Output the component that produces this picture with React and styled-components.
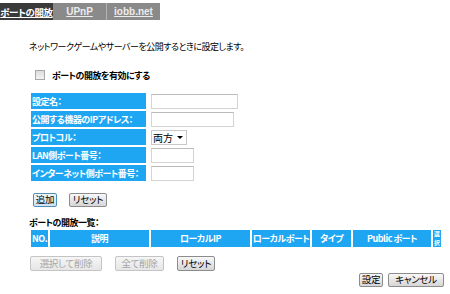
import React from "react";
import styled, { createGlobalStyle } from "styled-components";

const Global = createGlobalStyle`
  html, body { margin: 0; padding: 0; background: #fff; }
  body {
    font-family: "Noto Sans CJK JP", "Liberation Sans", sans-serif;
    font-size: 9px;
    letter-spacing: -0.5px;
    color: #000;
    font-feature-settings: "palt";
  }
`;

const Page = styled.div`
  width: 450px;
  height: 294px;
  padding-top: 3px;
  box-sizing: border-box;
  overflow: hidden;
`;

const TabBar = styled.div`
  display: flex;
  width: 160px;
  height: 17px;
  background: #8a8a8a;
`;

const Tab = styled.a`
  display: flex;
  align-items: center;
  justify-content: center;
  width: ${(p) => p.$w}px;
  height: 100%;
  background: ${(p) => (p.$active ? "#3a3a3a" : "transparent")};
  color: ${(p) => (p.$active ? "#fff" : "#ececec")};
  font-weight: bold;
  font-size: ${(p) => (p.$active ? 9.5 : 10)}px;
  letter-spacing: ${(p) => (p.$active ? "-0.4px" : "0")};
  font-family: ${(p) => (p.$active ? "inherit" : '"Liberation Sans", sans-serif')};
  text-decoration: underline;
  border-right: ${(p) => (p.$sep ? "1px solid #b4b4b4" : "none")};
  box-sizing: border-box;
  white-space: nowrap;
`;

const Content = styled.div`
  padding-left: 29px;
`;

const Intro = styled.p`
  margin: 21px 0 0 0;
  line-height: 12px;
  white-space: nowrap;
`;

const CheckRow = styled.label`
  display: flex;
  align-items: center;
  gap: 7px;
  margin: 16px 0 0 6px;
  height: 12px;
  font-weight: bold;
`;

const Box = styled.span`
  width: 8px;
  height: 8px;
  border: 1px solid #a8a8a8;
  background: linear-gradient(#dcdcdc, #f4f4f4);
`;

const Form = styled.div`
  display: grid;
  grid-template-columns: 115px auto;
  column-gap: 5px;
  row-gap: 2px;
  margin: 12px 0 0 2px;
  justify-items: start;
  align-items: center;
`;

const Label = styled.div`
  width: 115px;
  height: 16px;
  background: #1fa6f3;
  color: #fff;
  font-weight: bold;
  display: flex;
  align-items: center;
  padding-left: 1px;
  box-sizing: border-box;
  white-space: nowrap;
`;

const Input = styled.div`
  width: ${(p) => p.$w}px;
  height: 15px;
  box-sizing: border-box;
  border: 1px solid #d4d4d4;
  border-top-color: #bcbcbc;
  background: #fff;
`;

const Select = styled.div`
  width: 36px;
  height: 15px;
  box-sizing: border-box;
  border: 1px solid #c8c8c8;
  display: flex;
  align-items: center;
  justify-content: space-between;
  padding: 0 3px 0 1px;
  font-size: 10px;
  letter-spacing: 0;
  background: #fff;
`;

const Arrow = styled.span`
  width: 0;
  height: 0;
  border-left: 3px solid transparent;
  border-right: 3px solid transparent;
  border-top: 3px solid #000;
`;

const Buttons = styled.div`
  display: flex;
  gap: ${(p) => p.$gap}px;
  margin: ${(p) => p.$m};
`;

const Button = styled.button`
  width: ${(p) => p.$w}px;
  height: ${(p) => p.$h || 14}px;
  padding: 0;
  font-family: inherit;
  font-feature-settings: "palt";
  font-size: 9.5px;
  letter-spacing: -0.3px;
  color: ${(p) => (p.disabled ? "#a6a6a6" : "#000")};
  border: 1px solid ${(p) => (p.$focus ? "#4f8fb8" : p.disabled ? "#c4c4c4" : "#8c8c8c")};
  border-radius: 2px;
  background: ${(p) =>
    p.disabled
      ? "linear-gradient(#f6f6f6, #e6e6e6)"
      : p.$focus
      ? "linear-gradient(#eef6fb, #cfe3f0)"
      : "linear-gradient(#f8f8f8, #d6d6d6)"};
  line-height: 1;
  white-space: nowrap;
`;

const ListTitle = styled.div`
  margin: 10px 0 0 0;
  font-weight: bold;
  line-height: 12px;
`;

const Header = styled.div`
  display: grid;
  grid-template-columns: 17px 99px 99px 58px 39px 78px 8px;
  column-gap: 2px;
  margin: 1px 0 0 2px;
  height: 17px;
`;

const HeadCell = styled.div`
  background: #1fa6f3;
  color: #fff;
  font-weight: bold;
  display: flex;
  flex-direction: ${(p) => (p.$tiny ? "column" : "row")};
  align-items: center;
  justify-content: ${(p) => (p.$left ? "flex-start" : "center")};
  white-space: nowrap;
  overflow: hidden;
  font-size: 9px;
  line-height: 12px;
  letter-spacing: -0.5px;
  padding-left: ${(p) => (p.$left ? 1 : 0)}px;
`;

const TinyChar = styled.span`
  display: block;
  font-size: 5.8px;
  line-height: 8.5px;
  height: 8.5px;
  letter-spacing: 0;
`;

const Footer = styled.div`
  display: flex;
  justify-content: flex-end;
  gap: 5px;
  padding-right: 6px;
  margin-top: 2px;
`;

export default function App() {
  return (
    <>
      <Global />
      <Page>
        <TabBar>
          <Tab $active $w={53}>ポートの開放</Tab>
          <Tab $w={54} $sep>UPnP</Tab>
          <Tab $w={53}>iobb.net</Tab>
        </TabBar>
        <Content>
          <Intro>ネットワークゲームやサーバーを公開するときに設定します。</Intro>
          <CheckRow>
            <Box />
            ポートの開放を有効にする
          </CheckRow>
          <Form>
            <Label>設定名：</Label>
            <Input $w={87} />
            <Label>公開する機器のIPアドレス：</Label>
            <Input $w={83} />
            <Label>プロトコル：</Label>
            <Select>
              両方 <Arrow />
            </Select>
            <Label>LAN側ポート番号：</Label>
            <Input $w={43} />
            <Label>インターネット側ポート番号：</Label>
            <Input $w={43} />
          </Form>
          <Buttons $gap={12} $m="12px 0 0 4px">
            <Button $w={24} $focus>追加</Button>
            <Button $w={38}>リセット</Button>
          </Buttons>
          <ListTitle>ポートの開放一覧：</ListTitle>
          <Header>
            <HeadCell $left>NO.</HeadCell>
            <HeadCell>説明</HeadCell>
            <HeadCell>ローカルIP</HeadCell>
            <HeadCell>ローカルポート</HeadCell>
            <HeadCell>タイプ</HeadCell>
            <HeadCell>Public ポート</HeadCell>
            <HeadCell $tiny>
              <TinyChar>選</TinyChar>
              <TinyChar>択</TinyChar>
            </HeadCell>
          </Header>
          <Buttons $gap={13} $m="9px 0 0 1px">
            <Button $w={72} $h={15} disabled>選択して削除</Button>
            <Button $w={49} $h={15} disabled>全て削除</Button>
            <Button $w={38} $h={15}>リセット</Button>
          </Buttons>
        </Content>
        <Footer>
          <Button $w={24}>設定</Button>
          <Button $w={56}>キャンセル</Button>
        </Footer>
      </Page>
    </>
  );
}
